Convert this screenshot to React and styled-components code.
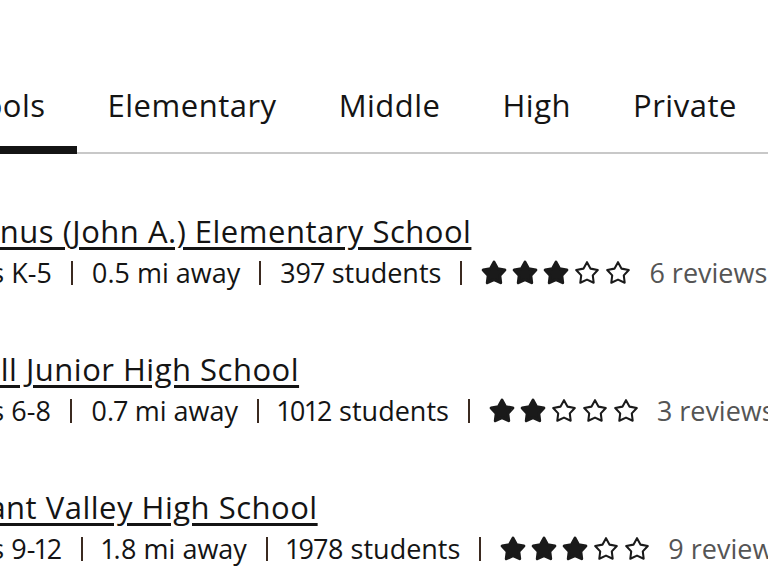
import styled, { createGlobalStyle } from "styled-components";

const GlobalStyle = createGlobalStyle`
  body {
    margin: 0;
    background: #ffffff;
    font-family: "Open Sans", "Noto Sans", sans-serif;
    color: #141414;
  }
`;

const tabs = ["All Schools", "Elementary", "Middle", "High", "Private"];

const schools = [
  { name: "McManus (John A.) Elementary School", grades: "K-5", distance: "0.5", students: 397, rating: 3, reviews: 6 },
  { name: "Bidwell Junior High School", grades: "6-8", distance: "0.7", students: 1012, rating: 2, reviews: 3 },
  { name: "Pleasant Valley High School", grades: "9-12", distance: "1.8", students: 1978, rating: 3, reviews: 9 },
];

function Star({ filled }) {
  return (
    <StarSvg viewBox="0 0 24 24" $filled={filled}>
      <polygon points="12,2 15.29,7.97 21.99,9.26 17.33,14.23 18.17,20.99 12,18.1 5.83,20.99 6.67,14.23 2.01,9.26 8.71,7.97" />
    </StarSvg>
  );
}

function App() {
  return (
    <Page>
      <GlobalStyle />
      <TabList>
        {tabs.map((tab, i) => (
          <Tab key={tab} $active={i === 0}>
            {tab}
          </Tab>
        ))}
      </TabList>
      <SchoolList>
        {schools.map((school) => (
          <SchoolRow key={school.name}>
            <SchoolName href="#">{school.name}</SchoolName>
            <Info>
              <span>Grades {school.grades}</span>
              <Separator />
              <span>{school.distance} mi away</span>
              <Separator />
              <span>{school.students} students</span>
              <Separator />
              <Stars>
                {[1, 2, 3, 4, 5].map((n) => (
                  <Star key={n} filled={n <= school.rating} />
                ))}
              </Stars>
              <Reviews>{school.reviews} reviews</Reviews>
            </Info>
          </SchoolRow>
        ))}
      </SchoolList>
    </Page>
  );
}

const Page = styled.div`
  width: 768px;
  height: 576px;
  overflow: hidden;
`;

const TabList = styled.ul`
  display: flex;
  list-style: none;
  margin: 87px 0 0 -145px;
  padding: 0;
  border-bottom: 2px solid #c8c8c8;
  width: max-content;
  min-width: 1000px;
`;

const Tab = styled.li`
  position: relative;
  flex-shrink: 0;
  padding: 0 31px 29px;
  font-size: 31px;
  line-height: 36px;
  letter-spacing: 0.5px;
  color: #141414;
  white-space: nowrap;

  &::after {
    content: "";
    display: ${(p) => (p.$active ? "block" : "none")};
    position: absolute;
    left: 0;
    right: 0;
    bottom: -2px;
    height: 8px;
    background: #141414;
  }
`;

const SchoolList = styled.div`
  display: flex;
  flex-direction: column;
  gap: 62px;
  margin: 60px 0 0 -86px;
`;

const SchoolRow = styled.div`
  display: flex;
  flex-direction: column;
  align-items: flex-start;
  gap: 8px;
  white-space: nowrap;
`;

const SchoolName = styled.a`
  margin-left: -4px;
  font-size: 31px;
  line-height: 34px;
  letter-spacing: 0.5px;
  color: #141414;
  text-decoration: underline;
  text-decoration-thickness: 3px;
  text-underline-offset: 4px;
`;

const Info = styled.div`
  display: flex;
  align-items: center;
  gap: 19px;
  width: max-content;
  font-size: 27px;
  line-height: 34px;
  font-variant-numeric: proportional-nums;
  font-feature-settings: "pnum" 1;
  color: #141414;

  & > * {
    flex-shrink: 0;
  }
`;

const Separator = styled.span`
  width: 2px;
  height: 24px;
  background: #3b2a20;
`;

const Stars = styled.span`
  display: flex;
  gap: 5px;
`;

const StarSvg = styled.svg`
  width: 26px;
  height: 26px;
  polygon {
    fill: ${(p) => (p.$filled ? "#1a1a1a" : "none")};
    stroke: #1a1a1a;
    stroke-width: ${(p) => (p.$filled ? 2.8 : 1.9)};
    stroke-linejoin: round;
  }
`;

const Reviews = styled.span`
  margin-left: -1px;
  color: #555555;
`;

export default App;
